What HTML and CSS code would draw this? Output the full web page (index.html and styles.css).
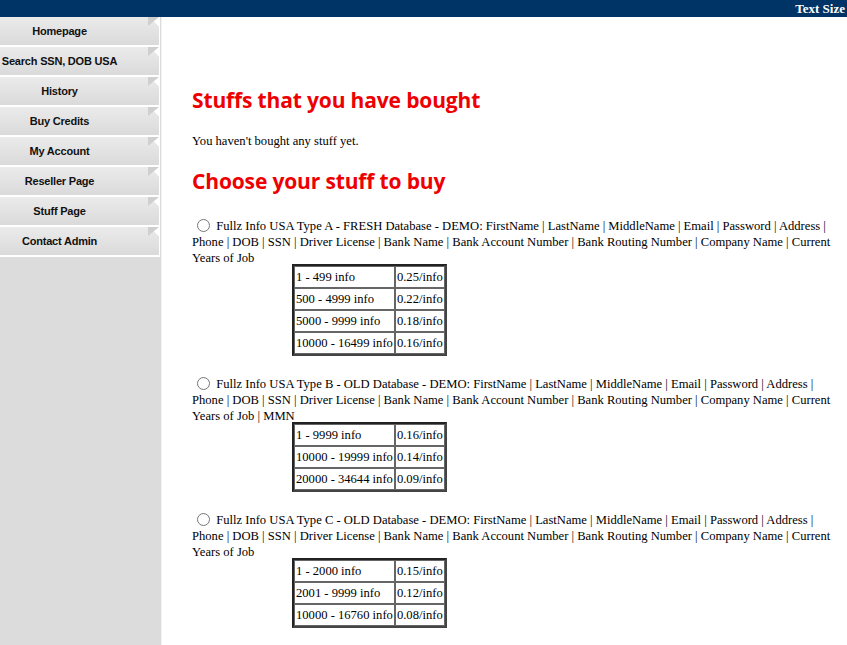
FILE: index.html
```html
<!DOCTYPE html>
<html>
<head>
<meta charset="utf-8">
<title>Stuff Page</title>
<link rel="stylesheet" href="styles.css">
</head>
<body>
<div class="topbar"><span class="textsize">Text Size</span></div>
<div class="layout">
  <nav class="sidebar">
    <a class="navitem" href="#">Homepage</a>
    <a class="navitem" href="#">Search SSN, DOB USA</a>
    <a class="navitem" href="#">History</a>
    <a class="navitem" href="#">Buy Credits</a>
    <a class="navitem" href="#">My Account</a>
    <a class="navitem" href="#">Reseller Page</a>
    <a class="navitem" href="#">Stuff Page</a>
    <a class="navitem" href="#">Contact Admin</a>
  </nav>
  <main class="content">
    <h1 class="heading">Stuffs that you have bought</h1>
    <p class="note">You haven't bought any stuff yet.</p>
    <h1 class="heading heading2">Choose your stuff to buy</h1>

    <div class="product">
      <p class="desc"><input type="radio" name="stuff" class="radio"> Fullz Info USA Type A - FRESH Database - DEMO: FirstName | LastName | MiddleName | Email | Password | Address | Phone | DOB | SSN | Driver License | Bank Name | Bank Account Number | Bank Routing Number | Company Name | Current Years of Job</p>
      <table class="prices">
        <tr><td class="range">1 - 499 info</td><td>0.25/info</td></tr>
        <tr><td class="range">500 - 4999 info</td><td>0.22/info</td></tr>
        <tr><td class="range">5000 - 9999 info</td><td>0.18/info</td></tr>
        <tr><td class="range">10000 - 16499 info</td><td>0.16/info</td></tr>
      </table>
    </div>

    <div class="product">
      <p class="desc"><input type="radio" name="stuff" class="radio"> Fullz Info USA Type B - OLD Database - DEMO: FirstName | LastName | MiddleName | Email | Password | Address | Phone | DOB | SSN | Driver License | Bank Name | Bank Account Number | Bank Routing Number | Company Name | Current Years of Job | MMN</p>
      <table class="prices">
        <tr><td class="range">1 - 9999 info</td><td>0.16/info</td></tr>
        <tr><td class="range">10000 - 19999 info</td><td>0.14/info</td></tr>
        <tr><td class="range">20000 - 34644 info</td><td>0.09/info</td></tr>
      </table>
    </div>

    <div class="product">
      <p class="desc"><input type="radio" name="stuff" class="radio"> Fullz Info USA Type C - OLD Database - DEMO: FirstName | LastName | MiddleName | Email | Password | Address | Phone | DOB | SSN | Driver License | Bank Name | Bank Account Number | Bank Routing Number | Company Name | Current Years of Job</p>
      <table class="prices">
        <tr><td class="range">1 - 2000 info</td><td>0.15/info</td></tr>
        <tr><td class="range">2001 - 9999 info</td><td>0.12/info</td></tr>
        <tr><td class="range">10000 - 16760 info</td><td>0.08/info</td></tr>
      </table>
    </div>
  </main>
</div>
</body>
</html>
```
FILE: styles.css
```css
html, body {
  margin: 0;
  padding: 0;
  background: #ffffff;
}
body {
  font-family: "Liberation Serif", "Times New Roman", serif;
  font-size: 12.6px;
  color: #000;
}
.topbar {
  height: 17px;
  background: #003366;
  display: flex;
  justify-content: flex-end;
  align-items: center;
}
.textsize {
  color: #fff;
  font-weight: bold;
  font-size: 13px;
  padding-right: 2px;
  line-height: 17px;
}
.layout {
  display: flex;
  min-height: 628px;
}
.sidebar {
  width: 161px;
  flex: 0 0 161px;
  background: #dcdcdc;
  border-right: 1px solid #f2f2f2;
  display: flex;
  flex-direction: column;
}
.navitem {
  position: relative;
  display: block;
  height: 28px;
  line-height: 28px;
  text-align: center;
  padding-right: 40px;
  font-family: "Liberation Sans", Arial, sans-serif;
  font-weight: bold;
  font-size: 11px;
  letter-spacing: -0.2px;
  color: #111;
  text-decoration: none;
  background: linear-gradient(#ebebeb, #dadada);
  border-bottom: 2px solid #ffffff;
  border-right: 1px solid #ffffff;
  margin-right: 1px;
  white-space: nowrap;
}
.navitem::after {
  content: "";
  position: absolute;
  top: 0;
  right: 0;
  width: 0;
  height: 0;
  border-left: 11px solid #cfcfcf;
  border-bottom: 9px solid transparent;
}
.navitem::before {
  content: "";
  position: absolute;
  top: 0;
  right: 0;
  width: 11px;
  height: 9px;
  background: linear-gradient(to bottom left, #ffffff 50%, transparent 50%);
}
.content {
  flex: 1;
  padding: 0 5px 0 30px;
}
.heading {
  font-family: "Open Sans", "DejaVu Sans", sans-serif;
  font-weight: bold;
  font-size: 21px;
  color: #ee0000;
  margin: 70px 0 0 0;
  line-height: 26px;
  letter-spacing: -0.15px;
}
.heading2 {
  margin-top: 19px;
}
.note {
  margin: 20px 0 0 0;
  line-height: 16px;
}
.product {
  margin-top: 24px;
}
.product + .product {
  margin-top: 20px;
}
.desc {
  margin: 0;
  line-height: 16px;
}
.radio {
  margin: 0 3px 0 5px;
  width: 13px;
  height: 13px;
  vertical-align: -2px;
}
.prices {
  margin-left: 100px;
  margin-top: -2px;
  border-collapse: separate;
  border-spacing: 0;
  border: 2px solid #222;
  border-right-color: #444;
  border-bottom-color: #444;
}
.prices td {
  border: 1px solid #666;
  height: 20px;
  padding: 0 1px;
  line-height: 16px;
  white-space: nowrap;
}
.prices td.range {
  width: 94px;
}
```
